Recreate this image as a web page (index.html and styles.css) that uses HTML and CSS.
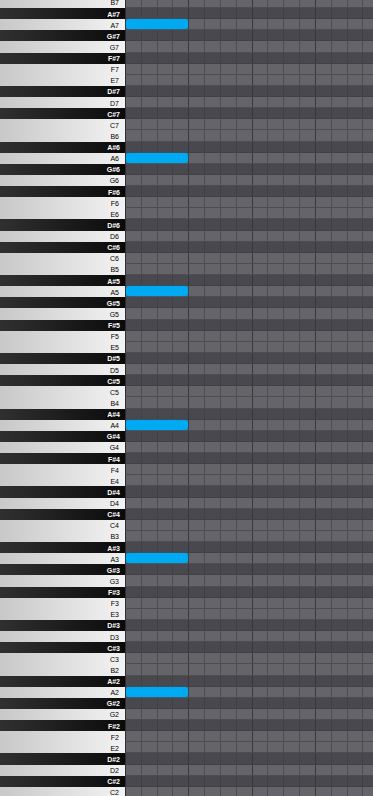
FILE: index.html
```html
<!DOCTYPE html>
<html lang="en">
<head>
    <meta charset="UTF-8">
    <meta name="viewport" content="width=device-width, initial-scale=1.0">
    <title>Piano Roll</title>
    <link rel="stylesheet" href="styles.css">
</head>
<body>
    <div class="roll" id="roll"></div>

    <script>
        const names = ['B', 'A#', 'A', 'G#', 'G', 'F#', 'F', 'E', 'D#', 'D', 'C#', 'C'];
        const roll = document.getElementById("roll");

        for (let oct = 7; oct >= 2; oct--) {
            names.forEach((n) => {
                const black = n.includes('#');
                const row = document.createElement('div');
                row.className = 'row ' + (black ? 'black' : 'white');

                const key = document.createElement('div');
                key.className = 'key';
                key.innerText = n + oct;
                row.appendChild(key);

                const lane = document.createElement('div');
                lane.className = 'lane';
                // one note per octave, on A
                if (n === 'A') {
                    const note = document.createElement('div');
                    note.className = 'note';
                    lane.appendChild(note);
                }
                row.appendChild(lane);
                roll.appendChild(row);
            });
        }
    </script>
</body>
</html>
```

FILE: styles.css
```css
*{
    padding: 0;
    margin: 0;
    box-sizing: border-box;
}
body{
    background-color: #2b2b2f;
    font-family: 'Liberation Sans', Arial, sans-serif;
    overflow: hidden;
}
.roll{
    margin-top: -3.13px;
}
.row{
    display: flex;
    height: 11.13px;
}
.key{
    width: 125px;
    flex: none;
    display: flex;
    align-items: center;
    justify-content: flex-end;
    padding-top: 1px;
    padding-right: 6px;
    font-size: 7px;
    line-height: 1;
}
.white .key{
    background: linear-gradient(to right, #c8c8c8, #f3f3f3);
    color: #000000;
}
.black .key{
    background: linear-gradient(to right, #303030, #0a0a0a);
    color: #ffffff;
    font-weight: bold;
    padding-right: 5px;
}
.lane{
    flex: 1;
    display: flex;
    align-items: flex-start;
    border-left: 1px solid #2c2c30;
    border-bottom: 1px solid #4c4c52;
    background-color: #646469;
    background-image:
        repeating-linear-gradient(to right, transparent 0 62.33px, #38383d 62.33px 63.33px),
        repeating-linear-gradient(to right, transparent 0 14.83px, #4c4c52 14.83px 15.83px);
}
.black .lane{
    background-color: #48484e;
    border-bottom-color: #404045;
    background-image:
        repeating-linear-gradient(to right, transparent 0 62.33px, #36363b 62.33px 63.33px),
        repeating-linear-gradient(to right, transparent 0 14.83px, #404045 14.83px 15.83px);
}
.note{
    width: 62px;
    height: 10px;
    background-color: #00aaf2;
    border-radius: 3px;
    box-shadow: 0 0 2px rgba(0, 170, 242, 0.6);
}
```
